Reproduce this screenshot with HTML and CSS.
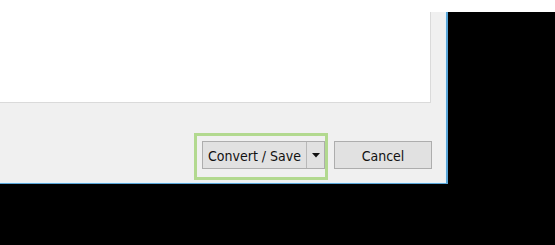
FILE: index.html
```html
<!DOCTYPE html>
<html>
<head>
<meta charset="utf-8">
<link rel="stylesheet" href="styles.css">
</head>
<body>
<div class="topstrip"></div>
<div class="stage">
  <div class="dialog">
    <div class="panel"></div>
    <div class="footer">
      <div class="highlight">
        <div class="split-btn">
          <span class="split-main">Convert / Save</span>
          <span class="split-arrow">
            <svg width="8" height="5" viewBox="0 0 8 5"><path d="M0 0 H8 L4 4.5 Z" fill="#111"/></svg>
          </span>
        </div>
      </div>
      <div class="btn cancel">Cancel</div>
    </div>
  </div>
</div>
</body>
</html>
```
FILE: styles.css
```css
html, body {
  margin: 0;
  padding: 0;
  background: #000;
  width: 555px;
  height: 245px;
  overflow: hidden;
}
.topstrip {
  height: 12px;
  background: #fff;
}
.stage {
  display: flex;
}
.dialog {
  width: 446px;
  height: 171px;
  background: #f0f0f0;
  border-right: 2px solid #5aa6d8;
  border-bottom: 1px solid #5aa6d8;
  box-shadow: inset -1px -1px 0 #e4f2fa;
  display: flex;
  flex-direction: column;
  font-family: "DejaVu Sans Condensed", "Noto Sans", sans-serif;
  font-size: 14px;
  color: #111;
}
.panel {
  width: 430px;
  height: 90px;
  background: #fff;
  border-right: 1px solid #dadada;
  border-bottom: 1px solid #dadada;
}
.footer {
  display: flex;
  justify-content: flex-end;
  align-items: flex-start;
  padding-top: 30px;
  padding-right: 14px;
}
.highlight {
  border: 3px solid #b2d98f;
  padding: 5px 0 8px 5px;
}
.split-btn {
  display: flex;
  height: 26px;
  width: 121px;
  border: 1px solid #adadad;
  background: #e1e1e1;
}
.split-main {
  flex: 1;
  display: flex;
  align-items: center;
  justify-content: center;
  padding-top: 2px;
  border-right: 1px solid #b8b8b8;
}
.split-arrow {
  width: 17px;
  display: flex;
  align-items: center;
  justify-content: center;
}
.btn {
  height: 24px;
  padding-top: 2px;
  display: flex;
  align-items: center;
  justify-content: center;
  border: 1px solid #adadad;
  background: #e1e1e1;
}
.cancel {
  width: 96px;
  margin-top: 8px;
  margin-left: 6px;
}
```
